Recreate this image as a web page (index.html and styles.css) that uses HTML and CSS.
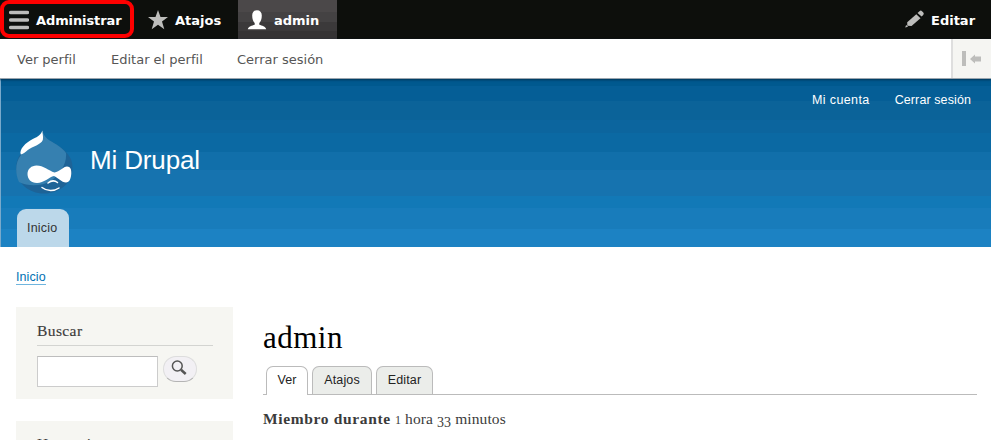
FILE: index.html
```
<!DOCTYPE html>
<html lang="es">
<head>
<meta charset="utf-8">
<title>admin | Mi Drupal</title>
<link rel="stylesheet" href="styles.css">
</head>
<body>
<nav class="toolbar">
  <a class="tool tool-menu"><svg width="20" height="20" viewBox="0 0 20 20"><path d="M1.800 2.500h16.600M1.800 10h16.600M1.800 17.500h16.600" stroke="#bdbdbb" stroke-width="3.700" stroke-linecap="round"/></svg><span>Administrar</span></a>
  <a class="tool tool-star"><svg width="20" height="20" viewBox="0 0 20 20"><path d="M10 0l2.500 7H20l-6 4.600 2.300 7.600L10 14.800l-6.300 4.400L6 11.600 0 7h7.500z" fill="#bdbdbb"/></svg><span>Atajos</span></a>
  <a class="tool tool-user"><svg width="20" height="20" viewBox="0 0 20 20"><path d="M5.200 5.500C5.200 2.200 7 .2 10 .2s4.800 2 4.800 5.300c0 3.500-1 6.100-2.500 7.500v1.700c2.600.8 6.300 1.700 6.900 4.600H.8c.6-2.900 4.300-3.800 6.900-4.600V13c-1.500-1.400-2.500-4-2.500-7.500z" fill="#fff"/></svg><span>admin</span></a>
  <a class="tool tool-edit"><svg width="20" height="20" viewBox="0 0 20 20"><g fill="#bdbdbb"><path d="M11.300 4.200l4.200 4-9 7.900-4.200-.4-.1-3.500z"/><path d="M12.500 3l2-1.800q1.300-1.200 2.500 0l1.300 1.300q1.100 1.200-.1 2.400L16.600 6.500z"/><path d="M.2 17.500l.9-2.600 2 1.800z"/></g></svg><span>Editar</span></a>
  <div class="highlight"></div>
</nav>
<div class="tray">
  <a class="t1">Ver perfil</a><a class="t2">Editar el perfil</a><a class="t3">Cerrar sesión</a>
  <button class="orient" aria-label="Orientación"><svg width="20" height="16" viewBox="0 0 20 16"><path d="M0 0h4v15H0zM8 8l5-4.500V5.500h6v5h-6V12.500z" fill="#bdbdbb"/></svg></button>
</div>
<header class="header">
  <div class="account"><a class="a1">Mi cuenta</a><a class="a2">Cerrar sesión</a></div>
  <div class="brand">
    <svg class="logo" width="58" height="65" viewBox="0 0 58 65">
      <path d="M26.500.5c1 7 7 10 14 14 9 6 16 12 16 23 0 16-13 26-28.500 26S.2 53 .2 37.500C.2 27 7 20 14 14.500 20 11 25 8 26.500.5z" fill="#1d6397"/>
      <path d="M26.500.5c1 7 7 10 14 14 4 2.500 7 5 9.500 8.500 1 10-5 20-15 28-9 5-22 6-32 1-4-8-4-20 2-27C11 13 25 13 26.500.5z" fill="#3680b0"/>
      <path d="M26.300.5c0 3 1.300 6 .5 9.500-2 5-10 6-15 10-2.500 2-4 4-7 4.500-2-5 5-12 12-15.500C22.500 6.500 25 4.500 26.300.5z" fill="#fff"/>
      <path d="M20.500 35.500c7 0 12 5 18 7 5-1 9-6 12.500-6 3.500 0 4.500 3 4.300 7-.3 5-1.800 9-5.300 9-4.500 0-8-5-12-6.500-5 1-10 7-17 7-6 0-9.500-4-9.500-9s4-8.500 9-8.500z" fill="#fff"/>
      <path d="M32 53q5-4 9.500-.5M26 57.500c5 4 12 4 17 .5" fill="none" stroke="#fff" stroke-width="1.500" stroke-linecap="round"/>
    </svg>
    <span class="name">Mi Drupal</span>
  </div>
  <a class="main-tab"><span>Inicio</span></a>
</header>
<div class="crumb"><a>Inicio</a></div>
<div class="columns">
  <aside>
    <section class="block"><h2><span>Buscar</span></h2>
      <div class="search"><input aria-label="Buscar"><button aria-label="Buscar"><svg width="16" height="16" viewBox="0 0 16 16"><circle cx="6.300" cy="6" r="4.900" fill="none" stroke="#555" stroke-width="1.500"/><path d="M10 9.800l4.700 4.200" stroke="#555" stroke-width="2.500"/></svg></button></div>
    </section>
    <section class="block tools"><h2><span>Herramientas</span></h2></section>
  </aside>
  <main>
    <h1><span>admin</span></h1>
    <div class="tabs"><a class="active w1">Ver</a><a class="w2">Atajos</a><a class="w3">Editar</a></div>
    <p><b>Miembro durante</b><span class="since"><span class="old">1</span> hora <span class="old low">33</span> minutos</span></p>
  </main>
</div>
</body>
</html>
```
FILE: styles.css
```
* { box-sizing: border-box; }
html { overflow: hidden; }
body { display: flex; flex-direction: column; margin: 0; height: 440px; overflow: hidden; background: #fff; font-family: "Liberation Sans", Arial, sans-serif; font-size: 12.500px; color: #3b3b3b; }
.toolbar { position: relative; flex: none; display: flex; height: 39px; background: #0d0f0c; font: bold 13px "DejaVu Sans", Verdana, sans-serif; color: #fff; }
.tool { display: flex; height: 39px; align-items: center; gap: 7px; padding-left: 9px; white-space: nowrap; }
.tool svg { flex: none; }
.tool span { padding-top: 1px; }
.tool-menu { width: 139px; letter-spacing: -0.1px; }
.tool-star { width: 99px; }
.tool-user { width: 99px; background: linear-gradient(#4b4849 0 12px, #444243 12px 22px, #3b393a 22px 31px, #353334 31px); }
.tool-edit { margin-left: auto; width: 95px; gap: 6px; }
.highlight { position: absolute; left: 0; top: 0; width: 134px; height: 38px; border: 4px solid #fe0000; border-radius: 9px; }
.tray { position: relative; z-index: 1; flex: none; display: flex; height: 40px; align-items: center; padding-left: 17px; color: #565656; font: 13px "DejaVu Sans", Verdana, sans-serif; border-bottom: 1px solid #9ba5ae; box-shadow: 0 1px 2px #003456; background: #fff; }
.tray a { white-space: nowrap; padding-top: 2px; letter-spacing: 0; }
.t1 { width: 94px; } .t2 { width: 126px; } .t3 { width: 100px; }
.orient { margin-left: auto; width: 40px; height: 39px; border: 0; border-left: 2px solid #dedede; background: #f5f5f2; padding: 3px 0 0 9px; text-align: left; }
.header { flex: none; height: 168px; border-left: 1px solid #79a9cb; background: linear-gradient(#00598f 0 7px, #055e96 7px 22px, #0b6399 22px 41px, #0c659e 41px 54px, #0b69a3 54px 73px, #116faa 73px 91px, #1673af 91px 117px, #1279b7 117px 129px, #187cbb 129px 150px, #1c82c3 150px); }
.account { display: flex; justify-content: flex-end; height: 51px; padding: 14px 20px 0 0; color: #fff; gap: 25px; line-height: 14px; }
.account a { white-space: nowrap; }
.a1 { letter-spacing: .4px; } .a2 { letter-spacing: .1px; }
.brand { display: flex; height: 79px; padding-left: 15px; }
.name { margin: 15px 0 0 16px; font-size: 26px; line-height: 30px; color: #fff; letter-spacing: -.15px; }
.main-tab { display: block; width: 52px; height: 38px; margin-left: 16px; padding: 12px 0 0 10px; background: #bcd8ea; border-radius: 9px 9px 0 0; line-height: 15px; color: #333; }
.main-tab span { letter-spacing: .2px; }
.crumb { flex: none; height: 60px; padding: 23px 0 0 16px; }
.crumb a { display: inline-block; height: 15px; line-height: 15px; color: #0071b3; border-bottom: 1px solid #70b5de; letter-spacing: .1px; }
.columns { display: flex; flex: 1; min-height: 0; overflow: hidden; font-family: "Liberation Serif", Georgia, serif; }
aside { width: 217px; margin-left: 16px; }
.block { height: 92px; margin-bottom: 22px; padding: 15px 20px 0 21px; background: #f6f6f2; }
.tools { height: 19px; margin: 0; overflow: hidden; padding-top: 14px; }
h2 { margin: 0 0 10px; height: 24px; font-size: 15.500px; font-weight: normal; line-height: 17px; border-bottom: 1px solid #d3d4d1; letter-spacing: .4px; -webkit-text-stroke: .15px #3b3b3b; }
.search { display: flex; gap: 5px; }
.search input { width: 121px; height: 31px; border: 1px solid #ccc; border-top-color: #bdbdbd; padding: 0; background: #fff; }
.search button { width: 34px; height: 26px; padding: 1px 3px 0 0; border: 1px solid #ddd; border-bottom-color: #b4b4b4; border-radius: 13px; background: #f2f0f4; }
main { width: 714px; margin-left: 30px; padding-top: 12px; }
h1 { margin: 0; height: 46px; font-size: 31px; line-height: 38px; font-weight: normal; color: #000; letter-spacing: .5px; }
.tabs { display: flex; height: 29px; margin-top: 1px; padding-left: 3px; gap: 4px; border-bottom: 1px solid #bbb; font-family: "Liberation Sans", Arial, sans-serif; }
.tabs a { height: 28px; border: 1px solid #bbb; border-bottom: 0; border-radius: 7px 7px 0 0; background: #ebedea; line-height: 26px; text-align: center; color: #222; letter-spacing: .15px; }
.tabs .active { height: 29px; background: #fff; }
.w1 { width: 42px; } .w2 { width: 60px; } .w3 { width: 57px; }
p { display: flex; margin: 15px 0 0; font-size: 15.500px; line-height: 18px; white-space: nowrap; }
p b { width: 132px; letter-spacing: .65px; }
.since { letter-spacing: .1px; }
.old { display: inline-block; font-size: 12px; line-height: 14px; }
.low { font-size: 14px; transform: translateY(3px); }
```
